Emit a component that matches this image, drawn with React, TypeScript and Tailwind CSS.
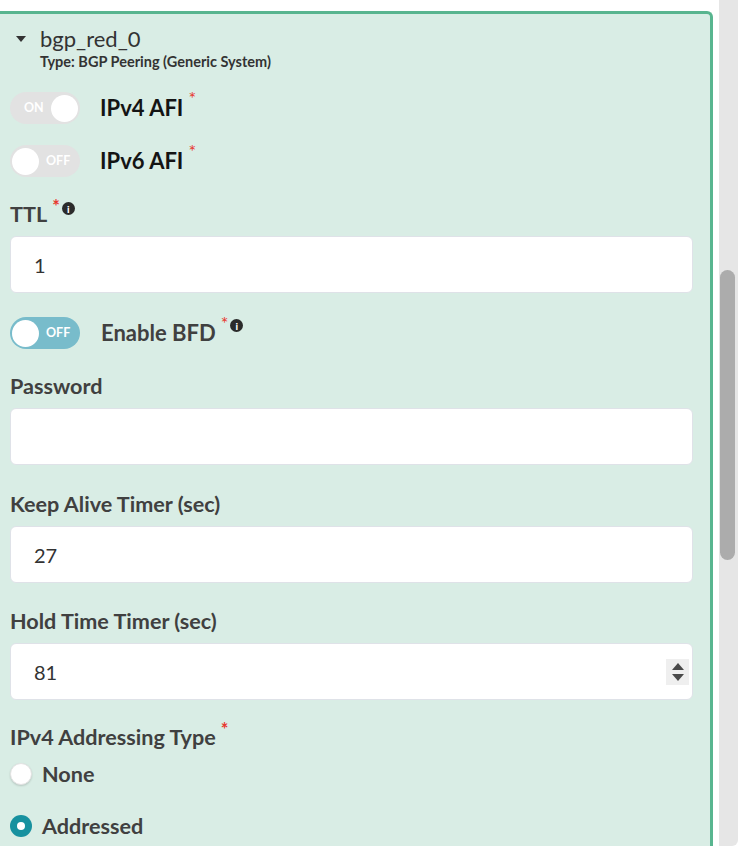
import React from "react";

const Req: React.FC = () => (
  <span className="relative -top-[3px] ml-[5px] self-start text-[18px] leading-none text-[#e8382f]">*</span>
);

const Info: React.FC = () => (
  <span className="ml-[2px] mt-[2px] flex h-[13px] w-[13px] items-center justify-center self-start rounded-full bg-[#2b2b2b] text-[10px] font-black leading-none text-white">
    i
  </span>
);

const Toggle: React.FC<{ on?: boolean; tone?: "gray" | "teal" }> = ({ on, tone = "gray" }) => (
  <div
    className={`relative flex h-[32px] w-[70px] shrink-0 items-center rounded-full ${
      tone === "teal" ? "bg-[#78bccb]" : "bg-[#e2e2e2]"
    }`}
  >
    {on ? (
      <>
        <span className="ml-[14px] text-[12.5px] font-bold text-white">ON</span>
        <span className="absolute right-[2px] top-[2.5px] h-[27px] w-[27px] rounded-full bg-white" />
      </>
    ) : (
      <>
        <span className="absolute left-[2px] top-[2.5px] h-[27px] w-[27px] rounded-full bg-white" />
        <span className="ml-[36px] text-[12.5px] font-bold text-white">OFF</span>
      </>
    )}
  </div>
);

const Field: React.FC<{ label: string; value?: string; req?: boolean; info?: boolean; spin?: boolean }> = ({
  label,
  value,
  req,
  info,
  spin,
}) => (
  <div className="flex flex-col">
    <div className="flex h-[28px] items-center text-[21.6px] font-bold leading-[28px] text-[#404040]">
      <span>{label}</span>
      {req && <Req />}
      {info && <Info />}
    </div>
    <div className="mt-[8px] flex h-[57px] w-[683px] items-center rounded-[6px] border border-[#dfe2e8] bg-white pl-[23px] pr-[3px] text-[20px] text-[#333]">
      <span className="flex-1">{value}</span>
      {spin && (
        <div className="flex h-[26px] w-[23px] flex-col items-center justify-center gap-[4px] bg-[#efefef]">
          <span className="h-0 w-0 border-x-[6px] border-b-[7px] border-x-transparent border-b-[#4a4a4a]" />
          <span className="h-0 w-0 border-x-[6px] border-t-[7px] border-x-transparent border-t-[#4a4a4a]" />
        </div>
      )}
    </div>
  </div>
);

const App: React.FC = () => {
  return (
    <div
      className="flex h-[846px] w-[738px] overflow-hidden bg-white"
      style={{ fontFamily: "Lato, 'Open Sans', sans-serif" }}
    >
      {/* Form panel */}
      <div className="w-[713px] shrink-0 pt-[11px]">
        <div className="h-[900px] rounded-tr-[6px] border-r-[3px] border-t-[3px] border-[#58b58f] bg-[#d9ede5] pl-[10px]">
          {/* Header */}
          <div className="flex items-center pt-[12px]">
            <span className="ml-[6px] h-0 w-0 border-x-[5px] border-t-[6px] border-x-transparent border-t-[#333]" />
            <span className="ml-[14px] text-[22px] leading-[26px] text-[#333]">bgp_red_0</span>
          </div>
          <div className="ml-[30px] mt-[1px] text-[14.5px] font-bold leading-[17px] text-[#333]">
            Type: BGP Peering (Generic System)
          </div>

          {/* AFI toggles */}
          <div className="mt-[22px] flex items-center">
            <Toggle on />
            <span className="ml-[20px] text-[22px] font-bold leading-[28px] text-[#141414]">IPv4 AFI</span>
            <Req />
          </div>
          <div className="mt-[21px] flex items-center">
            <Toggle />
            <span className="ml-[20px] text-[22px] font-bold leading-[28px] text-[#141414]">IPv6 AFI</span>
            <Req />
          </div>

          <div className="mt-[23px]">
            <Field label="TTL" value="1" req info />
          </div>

          <div className="mt-[24px] flex items-center">
            <Toggle tone="teal" />
            <span className="ml-[21px] text-[22px] font-bold leading-[28px] text-[#404040]">Enable BFD</span>
            <Req />
            <Info />
          </div>

          <div className="mt-[23px]">
            <Field label="Password" />
          </div>
          <div className="mt-[25px]">
            <Field label="Keep Alive Timer (sec)" value="27" />
          </div>
          <div className="mt-[24px]">
            <Field label="Hold Time Timer (sec)" value="81" spin />
          </div>

          {/* Addressing type */}
          <div className="mt-[23px] flex h-[28px] items-center text-[21.6px] font-bold leading-[28px] text-[#404040]">
            <span>IPv4 Addressing Type</span>
            <Req />
          </div>
          <div className="mt-[9px] flex flex-col gap-[24px]">
            <label className="flex h-[28px] items-center">
              <span className="h-[22px] w-[22px] rounded-full border border-[#e3e3e3] bg-white shadow-[0_1px_2px_rgba(0,0,0,0.15)]" />
              <span className="ml-[10px] text-[21.6px] font-bold leading-[28px] text-[#404040]">None</span>
            </label>
            <label className="flex h-[28px] items-center">
              <span className="flex h-[22px] w-[22px] items-center justify-center rounded-full bg-[#17919f]">
                <span className="h-[8px] w-[8px] rounded-full bg-white" />
              </span>
              <span className="ml-[10px] text-[21.6px] font-bold leading-[28px] text-[#404040]">Addressed</span>
            </label>
          </div>
        </div>
      </div>

      {/* Scrollbar */}
      <div className="ml-[6px] flex h-full w-[19px] flex-col rounded-br-[6px] bg-[#e6e6e6] pl-[1px] pr-[3px] pt-[270px]">
        <div className="h-[290px] w-[15px] rounded-full bg-[#acacac]" />
      </div>
    </div>
  );
};

export default App;
